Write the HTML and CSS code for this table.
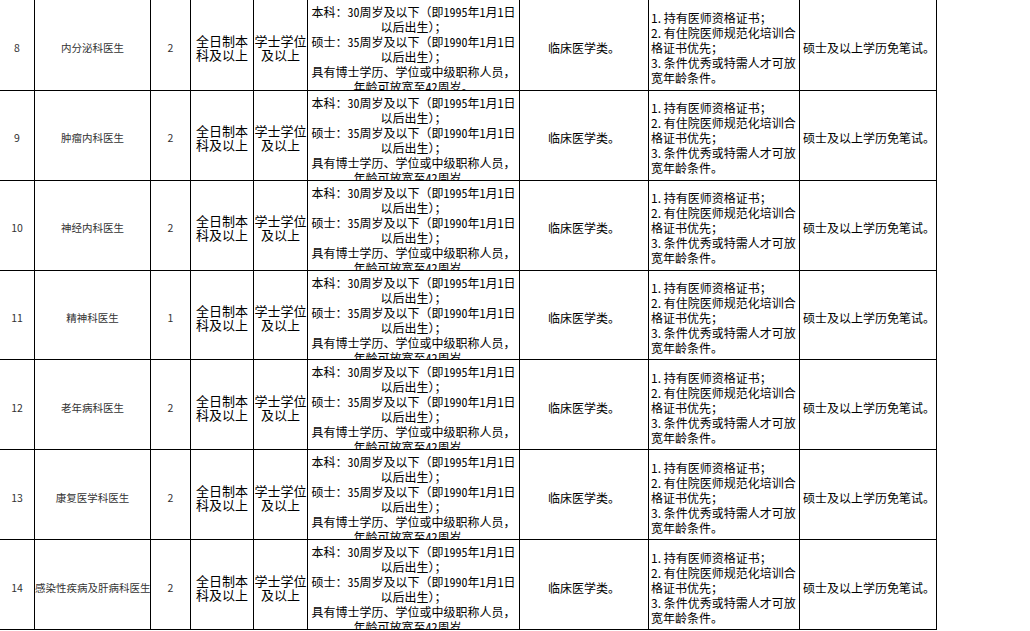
FILE: index.html
```html
<!DOCTYPE html>
<html lang="zh-CN">
<head>
<meta charset="utf-8">
<title>招聘岗位表</title>
<link rel="stylesheet" href="styles.css">
</head>
<body>
<div class="sheet">
  <div class="row first">
    <div class="c c1">8</div>
    <div class="c c2"><span>内分泌科医生</span></div>
    <div class="c c3">2</div>
    <div class="c c4">全日制本<br>科及以上</div>
    <div class="c c5">学士学位<br>及以上</div>
    <div class="c c6">本科：<span class="n">30</span>周岁及以下（即<span class="n">1995</span>年<span class="n">1</span>月<span class="n">1</span>日<br>以后出生）；<br>硕士：<span class="n">35</span>周岁及以下（即<span class="n">1990</span>年<span class="n">1</span>月<span class="n">1</span>日<br>以后出生）；<br>具有博士学历、学位或中级职称人员，<br>年龄可放宽至<span class="n">42</span>周岁。</div>
    <div class="c c7">临床医学类。</div>
    <div class="c c8">1. 持有医师资格证书；<br>2. 有住院医师规范化培训合<br>格证书优先；<br>3. 条件优秀或特需人才可放<br>宽年龄条件。</div>
    <div class="c c9">硕士及以上学历免笔试。</div>
  </div>
  <div class="row">
    <div class="c c1">9</div>
    <div class="c c2"><span>肿瘤内科医生</span></div>
    <div class="c c3">2</div>
    <div class="c c4">全日制本<br>科及以上</div>
    <div class="c c5">学士学位<br>及以上</div>
    <div class="c c6">本科：<span class="n">30</span>周岁及以下（即<span class="n">1995</span>年<span class="n">1</span>月<span class="n">1</span>日<br>以后出生）；<br>硕士：<span class="n">35</span>周岁及以下（即<span class="n">1990</span>年<span class="n">1</span>月<span class="n">1</span>日<br>以后出生）；<br>具有博士学历、学位或中级职称人员，<br>年龄可放宽至<span class="n">42</span>周岁。</div>
    <div class="c c7">临床医学类。</div>
    <div class="c c8">1. 持有医师资格证书；<br>2. 有住院医师规范化培训合<br>格证书优先；<br>3. 条件优秀或特需人才可放<br>宽年龄条件。</div>
    <div class="c c9">硕士及以上学历免笔试。</div>
  </div>
  <div class="row">
    <div class="c c1">10</div>
    <div class="c c2"><span>神经内科医生</span></div>
    <div class="c c3">2</div>
    <div class="c c4">全日制本<br>科及以上</div>
    <div class="c c5">学士学位<br>及以上</div>
    <div class="c c6">本科：<span class="n">30</span>周岁及以下（即<span class="n">1995</span>年<span class="n">1</span>月<span class="n">1</span>日<br>以后出生）；<br>硕士：<span class="n">35</span>周岁及以下（即<span class="n">1990</span>年<span class="n">1</span>月<span class="n">1</span>日<br>以后出生）；<br>具有博士学历、学位或中级职称人员，<br>年龄可放宽至<span class="n">42</span>周岁。</div>
    <div class="c c7">临床医学类。</div>
    <div class="c c8">1. 持有医师资格证书；<br>2. 有住院医师规范化培训合<br>格证书优先；<br>3. 条件优秀或特需人才可放<br>宽年龄条件。</div>
    <div class="c c9">硕士及以上学历免笔试。</div>
  </div>
  <div class="row">
    <div class="c c1">11</div>
    <div class="c c2"><span>精神科医生</span></div>
    <div class="c c3">1</div>
    <div class="c c4">全日制本<br>科及以上</div>
    <div class="c c5">学士学位<br>及以上</div>
    <div class="c c6">本科：<span class="n">30</span>周岁及以下（即<span class="n">1995</span>年<span class="n">1</span>月<span class="n">1</span>日<br>以后出生）；<br>硕士：<span class="n">35</span>周岁及以下（即<span class="n">1990</span>年<span class="n">1</span>月<span class="n">1</span>日<br>以后出生）；<br>具有博士学历、学位或中级职称人员，<br>年龄可放宽至<span class="n">42</span>周岁。</div>
    <div class="c c7">临床医学类。</div>
    <div class="c c8">1. 持有医师资格证书；<br>2. 有住院医师规范化培训合<br>格证书优先；<br>3. 条件优秀或特需人才可放<br>宽年龄条件。</div>
    <div class="c c9">硕士及以上学历免笔试。</div>
  </div>
  <div class="row">
    <div class="c c1">12</div>
    <div class="c c2"><span>老年病科医生</span></div>
    <div class="c c3">2</div>
    <div class="c c4">全日制本<br>科及以上</div>
    <div class="c c5">学士学位<br>及以上</div>
    <div class="c c6">本科：<span class="n">30</span>周岁及以下（即<span class="n">1995</span>年<span class="n">1</span>月<span class="n">1</span>日<br>以后出生）；<br>硕士：<span class="n">35</span>周岁及以下（即<span class="n">1990</span>年<span class="n">1</span>月<span class="n">1</span>日<br>以后出生）；<br>具有博士学历、学位或中级职称人员，<br>年龄可放宽至<span class="n">42</span>周岁。</div>
    <div class="c c7">临床医学类。</div>
    <div class="c c8">1. 持有医师资格证书；<br>2. 有住院医师规范化培训合<br>格证书优先；<br>3. 条件优秀或特需人才可放<br>宽年龄条件。</div>
    <div class="c c9">硕士及以上学历免笔试。</div>
  </div>
  <div class="row">
    <div class="c c1">13</div>
    <div class="c c2"><span>康复医学科医生</span></div>
    <div class="c c3">2</div>
    <div class="c c4">全日制本<br>科及以上</div>
    <div class="c c5">学士学位<br>及以上</div>
    <div class="c c6">本科：<span class="n">30</span>周岁及以下（即<span class="n">1995</span>年<span class="n">1</span>月<span class="n">1</span>日<br>以后出生）；<br>硕士：<span class="n">35</span>周岁及以下（即<span class="n">1990</span>年<span class="n">1</span>月<span class="n">1</span>日<br>以后出生）；<br>具有博士学历、学位或中级职称人员，<br>年龄可放宽至<span class="n">42</span>周岁。</div>
    <div class="c c7">临床医学类。</div>
    <div class="c c8">1. 持有医师资格证书；<br>2. 有住院医师规范化培训合<br>格证书优先；<br>3. 条件优秀或特需人才可放<br>宽年龄条件。</div>
    <div class="c c9">硕士及以上学历免笔试。</div>
  </div>
  <div class="row">
    <div class="c c1">14</div>
    <div class="c c2 over"><span>感染性疾病及肝病科医生</span></div>
    <div class="c c3">2</div>
    <div class="c c4">全日制本<br>科及以上</div>
    <div class="c c5">学士学位<br>及以上</div>
    <div class="c c6">本科：<span class="n">30</span>周岁及以下（即<span class="n">1995</span>年<span class="n">1</span>月<span class="n">1</span>日<br>以后出生）；<br>硕士：<span class="n">35</span>周岁及以下（即<span class="n">1990</span>年<span class="n">1</span>月<span class="n">1</span>日<br>以后出生）；<br>具有博士学历、学位或中级职称人员，<br>年龄可放宽至<span class="n">42</span>周岁。</div>
    <div class="c c7">临床医学类。</div>
    <div class="c c8">1. 持有医师资格证书；<br>2. 有住院医师规范化培训合<br>格证书优先；<br>3. 条件优秀或特需人才可放<br>宽年龄条件。</div>
    <div class="c c9">硕士及以上学历免笔试。</div>
  </div>
</div>
</body>
</html>
```
FILE: styles.css
```css
html, body {
  margin: 0;
  padding: 0;
  background: #fff;
}
body {
  font-family: "Noto Sans CJK SC", "Noto Sans", sans-serif;
  color: #000;
  font-size: 12px;
}
.sheet {
  width: 937px;
}
.row {
  display: grid;
  grid-template-columns: 35px 116px 40px 63px 54px 212px 129px 151px 137px;
  height: 89.83px;
}
.row.first {
  height: 91px;
}
.c {
  box-sizing: border-box;
  border-right: 1px solid #000;
  border-bottom: 1px solid #000;
  overflow: hidden;
  display: flex;
  align-items: center;
  justify-content: center;
  text-align: center;
  white-space: nowrap;
  padding-top: 5px;
  line-height: 15px;
}
.c1, .c2, .c3 {
  font-size: 10.5px;
  color: #333;
}
.c2.over {
  justify-content: flex-start;
}
.c4, .c5 {
  font-size: 13px;
  line-height: 14px;
  padding-top: 6px;
}
.c6 {
  display: block;
  padding-top: 4px;
  font-size: 12px;
  line-height: 15px;
}
.n {
  font-feature-settings: "hwid";
}
.c7 {
  font-size: 12px;
}
.c8 {
  justify-content: flex-start;
  text-align: left;
  padding-left: 2px;
  font-size: 12px;
  line-height: 15px;
}
.c9 {
  justify-content: flex-start;
  text-align: left;
  padding-left: 3px;
  font-size: 12px;
}
```
